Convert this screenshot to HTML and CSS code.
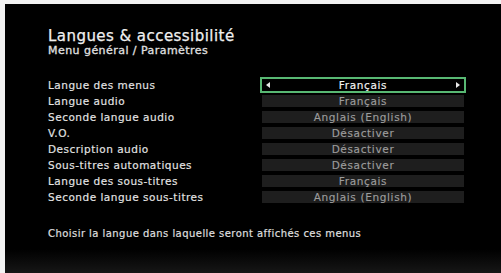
FILE: index.html
```html
<!DOCTYPE html>
<html lang="fr">
<head>
<meta charset="utf-8">
<link rel="stylesheet" href="styles.css">
</head>
<body>
<div class="screen">
  <header class="head">
    <h1 class="title">Langues &amp; accessibilité</h1>
    <div class="crumb">Menu général / Paramètres</div>
  </header>
  <div class="rows">
    <div class="row"><span class="label">Langue des menus</span><span class="value selected"><span class="arrow left"></span>Français<span class="arrow right"></span></span></div>
    <div class="row"><span class="label">Langue audio</span><span class="value">Français</span></div>
    <div class="row"><span class="label">Seconde langue audio</span><span class="value">Anglais (English)</span></div>
    <div class="row"><span class="label">V.O.</span><span class="value">Désactiver</span></div>
    <div class="row"><span class="label">Description audio</span><span class="value">Désactiver</span></div>
    <div class="row"><span class="label">Sous-titres automatiques</span><span class="value">Désactiver</span></div>
    <div class="row"><span class="label">Langue des sous-titres</span><span class="value">Français</span></div>
    <div class="row"><span class="label">Seconde langue sous-titres</span><span class="value">Anglais (English)</span></div>
  </div>
  <p class="help">Choisir la langue dans laquelle seront affichés ces menus</p>
  <div class="footer"></div>
</div>
</body>
</html>
```
FILE: styles.css
```css
html, body {
  margin: 0;
  padding: 0;
  background: #f2f2f2;
  height: 273px;
  overflow: hidden;
}
.screen {
  margin: 4px 0 0 5px;
  height: 269px;
  background: #000;
  display: flex;
  flex-direction: column;
  font-family: "DejaVu Sans", sans-serif;
  color: #e6e6e6;
  padding-left: 43px;
  box-sizing: border-box;
}
.head {
  padding-top: 24px;
}
.title {
  margin: 0;
  font-size: 15px;
  font-weight: normal;
  line-height: 17px;
  color: #f0f0f0;
  letter-spacing: 0.45px;
  -webkit-text-stroke: 0.25px #f0f0f0;
}
.crumb {
  font-size: 11px;
  line-height: 11px;
  color: #e0e0e0;
  letter-spacing: 0.45px;
  -webkit-text-stroke: 0.3px #e0e0e0;
}
.rows {
  margin-top: 23px;
  display: flex;
  flex-direction: column;
  gap: 4px;
}
.row {
  display: flex;
  align-items: center;
  height: 12px;
}
.label {
  width: 214px;
  font-size: 10.5px;
  letter-spacing: 0.5px;
  color: #e4e4e4;
  line-height: 12px;
  -webkit-text-stroke: 0.15px #e4e4e4;
}
.value {
  position: relative;
  width: 202px;
  height: 12px;
  background: #1e1e1e;
  color: #9c9c9c;
  font-size: 10.5px;
  letter-spacing: 0.65px;
  line-height: 12px;
  text-align: center;
  -webkit-text-stroke: 0.15px #9c9c9c;
}
.value.selected {
  background: #000;
  color: #f4f4f4;
  -webkit-text-stroke: 0.15px #f4f4f4;
  box-shadow: 0 0 0 2px #58b873;
}
.arrow {
  position: absolute;
  top: 3px;
  width: 0;
  height: 0;
  border-top: 3px solid transparent;
  border-bottom: 3px solid transparent;
}
.arrow.left {
  left: 4px;
  border-right: 4px solid #e8e8e8;
}
.arrow.right {
  right: 4px;
  border-left: 4px solid #e8e8e8;
}
.help {
  margin: 25px 0 0;
  font-size: 10px;
  letter-spacing: 0.45px;
  line-height: 11px;
  color: #e0e0e0;
  -webkit-text-stroke: 0.15px #e0e0e0;
}
.footer {
  margin: 0 0 0 -43px;
  flex: 1;
  background: linear-gradient(to bottom, #000 0%, #000 30%, #161616 100%);
}
```
